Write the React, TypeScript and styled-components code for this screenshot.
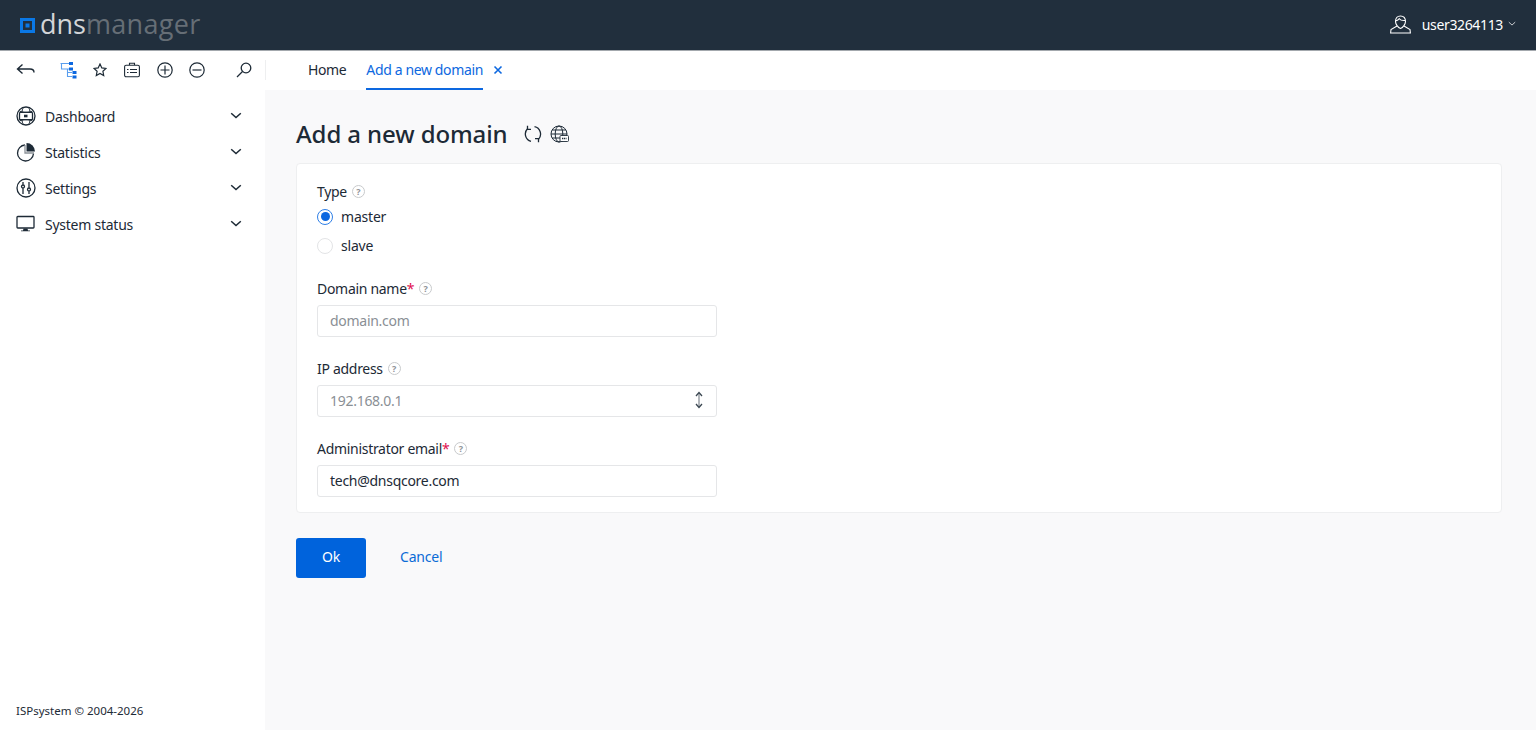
import React, { FC } from "react";
import styled, { createGlobalStyle } from "styled-components";

const GlobalStyle = createGlobalStyle`
  html, body {
    margin: 0;
    padding: 0;
    height: 100%;
    overflow: hidden;
  }
  body {
    font-family: "Noto Sans", "Open Sans", sans-serif;
    font-size: 14px;
    letter-spacing: -0.2px;
    color: #1d2a36;
    background: #f9f9fa;
  }
`;

const Page = styled.div`
  width: 1536px;
  height: 730px;
  display: flex;
  flex-direction: column;
`;

const Header = styled.header`
  height: 50px;
  flex: none;
  background: #212f3d;
  border-bottom: 1px solid #a3a8ad;
  display: flex;
  align-items: center;
  justify-content: space-between;
  padding: 0 20px;
`;

const Logo = styled.div`
  display: flex;
  align-items: center;
  gap: 5px;
  font-family: "Open Sans", sans-serif;
  font-size: 27px;
  font-weight: 500;
  letter-spacing: 0;
  line-height: 50px;
`;

const LogoWord = styled.span`
  margin-top: -2px;
`;

const LogoDns = styled.span`
  color: #d3d5d8;
`;

const LogoManager = styled.span`
  color: #666e76;
  letter-spacing: 0.3px;
`;

const UserBox = styled.div`
  display: flex;
  align-items: center;
  color: #fff;
  gap: 11px;
  padding-bottom: 2px;
`;

const UserName = styled.span`
  display: flex;
  align-items: center;
  gap: 5px;
  letter-spacing: -0.35px;
`;

const Toolbar = styled.div`
  height: 39px;
  flex: none;
  background: #fff;
  display: flex;
`;

const Tools = styled.div`
  width: 266px;
  flex: none;
  display: flex;
  align-items: center;
  padding: 0 0 1px 16px;
  box-sizing: border-box;
`;

const ToolIcon = styled.span<{ $w: number }>`
  width: ${(p) => p.$w}px;
  flex: none;
  display: flex;
  align-items: center;
`;

const ToolDivider = styled.span`
  width: 1px;
  height: 20px;
  margin-left: 13px;
  background: #eeeff0;
`;

const Tabs = styled.nav`
  display: flex;
  align-items: stretch;
  padding-left: 42px;
  gap: 20px;
  letter-spacing: -0.37px;
`;

const Tab = styled.div<{ $active?: boolean }>`
  display: flex;
  align-items: center;
  box-sizing: border-box;
  color: ${(p) => (p.$active ? "#0d68e0" : "#1d2a36")};
  border-bottom: 2px solid ${(p) => (p.$active ? "#0d68e0" : "transparent")};
`;

const TabClose = styled.span`
  display: flex;
  align-items: center;
  margin: 0 0 2px -10px;
`;

const Body = styled.div`
  flex: 1;
  display: flex;
  min-height: 0;
`;

const Sidebar = styled.aside`
  width: 265px;
  flex: none;
  background: #fff;
  display: flex;
  flex-direction: column;
  justify-content: space-between;
  padding: 8px 0 12px;
  box-sizing: border-box;
`;

const Menu = styled.ul`
  list-style: none;
  margin: 0;
  padding: 0;
`;

const MenuItem = styled.li`
  height: 36px;
  display: flex;
  align-items: center;
  padding: 0 23px 0 16px;
`;

const MenuIcon = styled.span`
  width: 29px;
  flex: none;
  display: flex;
  align-items: center;
`;

const MenuLabel = styled.span`
  flex: 1;
  letter-spacing: -0.25px;
`;

const Copyright = styled.div`
  font-size: 11.5px;
  letter-spacing: 0;
  padding-left: 16px;
`;

const Main = styled.main`
  flex: 1;
  padding: 29px 34px 0 31px;
`;

const TitleRow = styled.div`
  display: flex;
  align-items: center;
  height: 30px;
  margin-bottom: 14px;
`;

const Title = styled.h1`
  margin: 0 16px 2px 0;
  font-size: 24px;
  font-weight: 500;
  letter-spacing: -0.1px;
  color: #1d2a36;
`;

const TitleIcons = styled.div`
  display: flex;
  align-items: center;
  gap: 8px;
`;

const Card = styled.section`
  background: #fff;
  border: 1px solid #eeeff0;
  border-radius: 4px;
  padding: 19px 20px;
  height: 350px;
  box-sizing: border-box;
`;

const Field = styled.div`
  width: 400px;
  margin-bottom: 23px;
`;

const RadioField = styled(Field)`
  margin-bottom: 20px;
`;

const LabelRow = styled.div<{ $gap?: number }>`
  display: flex;
  align-items: center;
  gap: 5px;
  height: 18px;
  box-sizing: border-box;
  padding-bottom: 2px;
  letter-spacing: -0.3px;
  margin-bottom: ${(p) => p.$gap ?? 7}px;
`;

const Required = styled.span`
  color: #e0104f;
`;

const HelpBadge = styled.span`
  width: 11px;
  height: 11px;
  flex: none;
  border: 1px solid #c8cacc;
  border-radius: 50%;
  color: #8f9398;
  font-size: 9px;
  font-weight: 700;
  letter-spacing: 0;
  line-height: 11px;
  text-align: center;
`;

const RadioRow = styled.div`
  height: 29px;
  display: flex;
  align-items: center;
  gap: 8px;
`;

const RadioMark = styled.span<{ $checked?: boolean }>`
  width: 16px;
  height: 16px;
  box-sizing: border-box;
  border-radius: 50%;
  background: #fff;
  border: 1.5px solid ${(p) => (p.$checked ? "#2f7fe6" : "#e3e4e6")};
  display: flex;
  align-items: center;
  justify-content: center;
  &::after {
    content: "";
    display: ${(p) => (p.$checked ? "block" : "none")};
    width: 9px;
    height: 9px;
    border-radius: 50%;
    background: #0d68e0;
  }
`;

const InputBox = styled.div<{ $muted?: boolean }>`
  height: 32px;
  box-sizing: border-box;
  border: 1px solid #e5e6e8;
  border-radius: 3px;
  background: #fff;
  padding: 0 12px 2px;
  display: flex;
  align-items: center;
  justify-content: space-between;
  letter-spacing: -0.28px;
  color: ${(p) => (p.$muted ? "#8a8f95" : "#1d2a36")};
`;

const Actions = styled.div`
  display: flex;
  align-items: center;
  margin-top: 25px;
  gap: 34px;
`;

const OkButton = styled.button`
  width: 70px;
  height: 40px;
  border: 0;
  border-radius: 3px;
  padding: 0 0 4px;
  background: #0063dc;
  color: #fff;
  font: inherit;
  letter-spacing: inherit;
  cursor: pointer;
`;

const CancelLink = styled.a`
  color: #0b6bd6;
  padding-bottom: 4px;
`;

const Chevron: FC<{ color?: string; size?: number }> = ({ color = "#1d2a36", size = 12 }) => (
  <svg width={size} height={size} viewBox="0 0 12 12" fill="none" stroke={color} strokeWidth="1.5">
    <path d="M1.2 3.2 6 7.600l4.800-4.400" />
  </svg>
);

const Help: FC = () => <HelpBadge>?</HelpBadge>;

const stroke = { fill: "none", stroke: "#1d2a36", strokeWidth: 1.3 };

const DashIcon = () => (
  <svg width="20" height="20" viewBox="0 0 20 20" {...stroke}>
    <circle cx="10" cy="10" r="9" />
    <path d="M3.500 5c2 1 4 1.300 6.500 1.300S14.500 6 16.500 5M3.500 15c2-1 4-1.300 6.500-1.300s4.500.3 6.500 1.300M7.500 1.500C6.500 3 6 4.500 6 6.300M12.500 1.500c1 1.500 1.500 3 1.500 4.800M7.500 18.500C6.500 17 6 15.500 6 13.700M12.500 18.500c1-1.500 1.500-3 1.500-4.800" strokeWidth="1" />
    <rect x="3.500" y="6.300" width="13" height="7.400" rx="1" fill="#fff" />
    <rect x="8" y="8.700" width="3.500" height="2.600" fill="#1d2a36" stroke="none" />
  </svg>
);

const PieIcon = () => (
  <svg width="20" height="20" viewBox="0 0 20 20" {...stroke}>
    <path d="M9 3a8 8 0 1 0 8.500 8.500" />
    <path d="M9 3v8h9" stroke="#8b9198" />
    <path d="M10.500 1v8.500H19A8.500 8.500 0 0 0 10.500 1z" fill="#1d2a36" stroke="none" />
  </svg>
);

const SlidersIcon = () => (
  <svg width="20" height="20" viewBox="0 0 20 20" {...stroke}>
    <circle cx="10" cy="10" r="9" />
    <path d="M7 4v2.800M7 10.200V16M13 4v5.800M13 13.200V16" />
    <circle cx="7" cy="8.500" r="1.500" />
    <circle cx="13" cy="11.500" r="1.500" />
  </svg>
);

const MonitorIcon = () => (
  <svg width="20" height="20" viewBox="0 0 20 20" {...stroke}>
    <rect x="1" y="2.500" width="17" height="11.500" rx="0.800" />
    <path d="M7.500 14.500h4l.5 2h2v.8H5v-.8h2z" fill="#1d2a36" stroke="none" />
  </svg>
);

const BackIcon = () => (
  <svg width="20" height="14" viewBox="0 0 20 14" fill="none" stroke="#1d2a36" strokeWidth="1.4">
    <path d="M6.500 1.500 1.500 6l5 4.500M1.500 6H14c2.500 0 4 1.200 4 3.500" />
  </svg>
);

const TreeIcon = () => (
  <svg width="17" height="17" viewBox="0 0 17 17" fill="none" stroke="#5a9eee" strokeWidth="1.100">
    <path d="M0.500 1.500H9M1.500 1.500v5.500H9M7.500 7v7.500H12M7.500 10.500H12" />
    <g fill="#0d68e0" stroke="none">
      <rect x="9" y="0" width="4" height="3" />
      <rect x="9" y="5.500" width="4" height="3" />
      <rect x="12.500" y="9" width="4" height="3" />
      <rect x="12.500" y="13.500" width="4" height="3" />
    </g>
  </svg>
);

const StarIcon = () => (
  <svg width="14" height="14" viewBox="0 0 14 14" fill="none" stroke="#1d2a36" strokeWidth="1.2">
    <path d="m7 1 1.800 3.900 4.200.5-3.100 2.900.8 4.200L7 10.400l-3.700 2.100.8-4.200L1 5.400l4.200-.5z" />
  </svg>
);

const CaseIcon = () => (
  <svg width="16" height="16" viewBox="0 0 16 16" fill="none" stroke="#1d2a36" strokeWidth="1.100">
    <rect x="0.600" y="3.200" width="14.800" height="11.600" rx="1.500" />
    <path d="M5.500 3V1.200h5V3M3 7.500h1.500M6 7.500h7M3 10.500h1.500M6 10.500h7" />
  </svg>
);

const CircleSign: FC<{ plus?: boolean }> = ({ plus }) => (
  <svg width="16" height="16" viewBox="0 0 16 16" fill="none" stroke="#1d2a36" strokeWidth="1.200">
    <circle cx="8" cy="8" r="7.200" />
    <path d={plus ? "M3.500 8h9M8 3.500v9" : "M3.500 8h9"} />
  </svg>
);

const SearchIcon = () => (
  <svg width="16" height="16" viewBox="0 0 16 16" fill="none" stroke="#1d2a36" strokeWidth="1.300">
    <circle cx="10" cy="6" r="4.800" />
    <path d="M6.500 9.500 1 15" />
  </svg>
);

const UserIcon = () => (
  <svg width="21" height="19" viewBox="0 0 21 19" fill="none" stroke="#fff" strokeWidth="1.100">
    <path d="M5.500 6.500C5.500 3 7.500 1 10.500 1s5 2 5 5.500c0 2.500-2.500 6-5 7-2.500-1-5-4.500-5-7z" />
    <path d="M5.800 5.500c1.500.5 2.500-.5 3.500-1.800 1 1.500 3.500 2 5.800 1.800" />
    <path d="M7 11 1 14.500 .6 18h19.800l-.4-3.500-6-3.500" />
  </svg>
);

const RefreshIcon = () => (
  <svg width="18" height="18" viewBox="0 0 18 18" fill="none" stroke="#1d2a36" strokeWidth="1.300">
    <path d="M7 16.300A7.500 7.500 0 0 1 3.500 3.800" />
    <path d="M3.500 .8v3.500H7" />
    <path d="M10.500 1.700A7.500 7.500 0 0 1 14.500 14.200" />
    <path d="M14.500 17.200v-3.500H11" />
  </svg>
);

const GlobeIcon = () => (
  <svg width="19" height="18" viewBox="0 0 19 18" fill="none" stroke="#1d2a36" strokeWidth="1">
    <circle cx="9" cy="9" r="8" />
    <ellipse cx="9" cy="9" rx="3.800" ry="8" />
    <path d="M1 9h16M2.200 5h13.600M2.200 13h13.600" />
    <rect x="10" y="10.500" width="8.500" height="6" rx="1" fill="#fff" strokeWidth="0.900" />
    <path d="M12 13.500h4.500" strokeWidth="1.500" strokeDasharray="1.200 .6" />
  </svg>
);

const LogoMark = () => (
  <svg width="15" height="15" viewBox="0 0 15 15">
    <path fillRule="evenodd" fill="#0a78e6" d="M0 0h15v15H0zM3 3v9h9V3z" />
    <rect x="5.500" y="5.500" width="4" height="4" fill="#0a78e6" />
  </svg>
);

const UpDown = () => (
  <svg width="10" height="18" viewBox="0 0 10 18" fill="none" stroke="#5d6670" strokeWidth="1.300">
    <path d="M5 2v14" stroke="#8b9198" />
    <path d="M2 5l3-3.500L8 5M2 13l3 3.500L8 13" stroke="#3a4651" />
  </svg>
);

const CloseX = () => (
  <svg width="10" height="10" viewBox="0 0 10 10" fill="none" stroke="#0d68e0" strokeWidth="1.600">
    <path d="M1.500 1.500l7 7M8.500 1.500l-7 7" />
  </svg>
);

const menu = [
  { label: "Dashboard", icon: <DashIcon /> },
  { label: "Statistics", icon: <PieIcon /> },
  { label: "Settings", icon: <SlidersIcon /> },
  { label: "System status", icon: <MonitorIcon /> },
];

const App: FC = () => (
  <Page>
    <GlobalStyle />
    <Header>
      <Logo>
        <LogoMark />
        <LogoWord>
          <LogoDns>dns</LogoDns>
          <LogoManager>manager</LogoManager>
        </LogoWord>
      </Logo>
      <UserBox>
        <UserIcon />
        <UserName>
          user3264113
          <Chevron color="#c9ccd0" size={8} />
        </UserName>
      </UserBox>
    </Header>
    <Toolbar>
      <Tools>
        <ToolIcon $w={44}><BackIcon /></ToolIcon>
        <ToolIcon $w={33}><TreeIcon /></ToolIcon>
        <ToolIcon $w={31}><StarIcon /></ToolIcon>
        <ToolIcon $w={33}><CaseIcon /></ToolIcon>
        <ToolIcon $w={32}><CircleSign plus /></ToolIcon>
        <ToolIcon $w={47}><CircleSign /></ToolIcon>
        <ToolIcon $w={16}><SearchIcon /></ToolIcon>
        <ToolDivider />
      </Tools>
      <Tabs>
        <Tab>Home</Tab>
        <Tab $active>Add a new domain</Tab>
        <TabClose><CloseX /></TabClose>
      </Tabs>
    </Toolbar>
    <Body>
      <Sidebar>
        <Menu>
          {menu.map((m) => (
            <MenuItem key={m.label}>
              <MenuIcon>{m.icon}</MenuIcon>
              <MenuLabel>{m.label}</MenuLabel>
              <Chevron />
            </MenuItem>
          ))}
        </Menu>
        <Copyright>ISPsystem © 2004-2026</Copyright>
      </Sidebar>
      <Main>
        <TitleRow>
          <Title>Add a new domain</Title>
          <TitleIcons>
            <RefreshIcon />
            <GlobeIcon />
          </TitleIcons>
        </TitleRow>
        <Card>
          <RadioField>
            <LabelRow $gap={1}>Type <Help /></LabelRow>
            <RadioRow><RadioMark $checked />master</RadioRow>
            <RadioRow><RadioMark />slave</RadioRow>
          </RadioField>
          <Field>
            <LabelRow><span>Domain name<Required>*</Required></span><Help /></LabelRow>
            <InputBox $muted>domain.com</InputBox>
          </Field>
          <Field>
            <LabelRow>IP address <Help /></LabelRow>
            <InputBox $muted>192.168.0.1<UpDown /></InputBox>
          </Field>
          <Field>
            <LabelRow><span>Administrator email<Required>*</Required></span><Help /></LabelRow>
            <InputBox>tech@dnsqcore.com</InputBox>
          </Field>
        </Card>
        <Actions>
          <OkButton>Ok</OkButton>
          <CancelLink>Cancel</CancelLink>
        </Actions>
      </Main>
    </Body>
  </Page>
);

export default App;
